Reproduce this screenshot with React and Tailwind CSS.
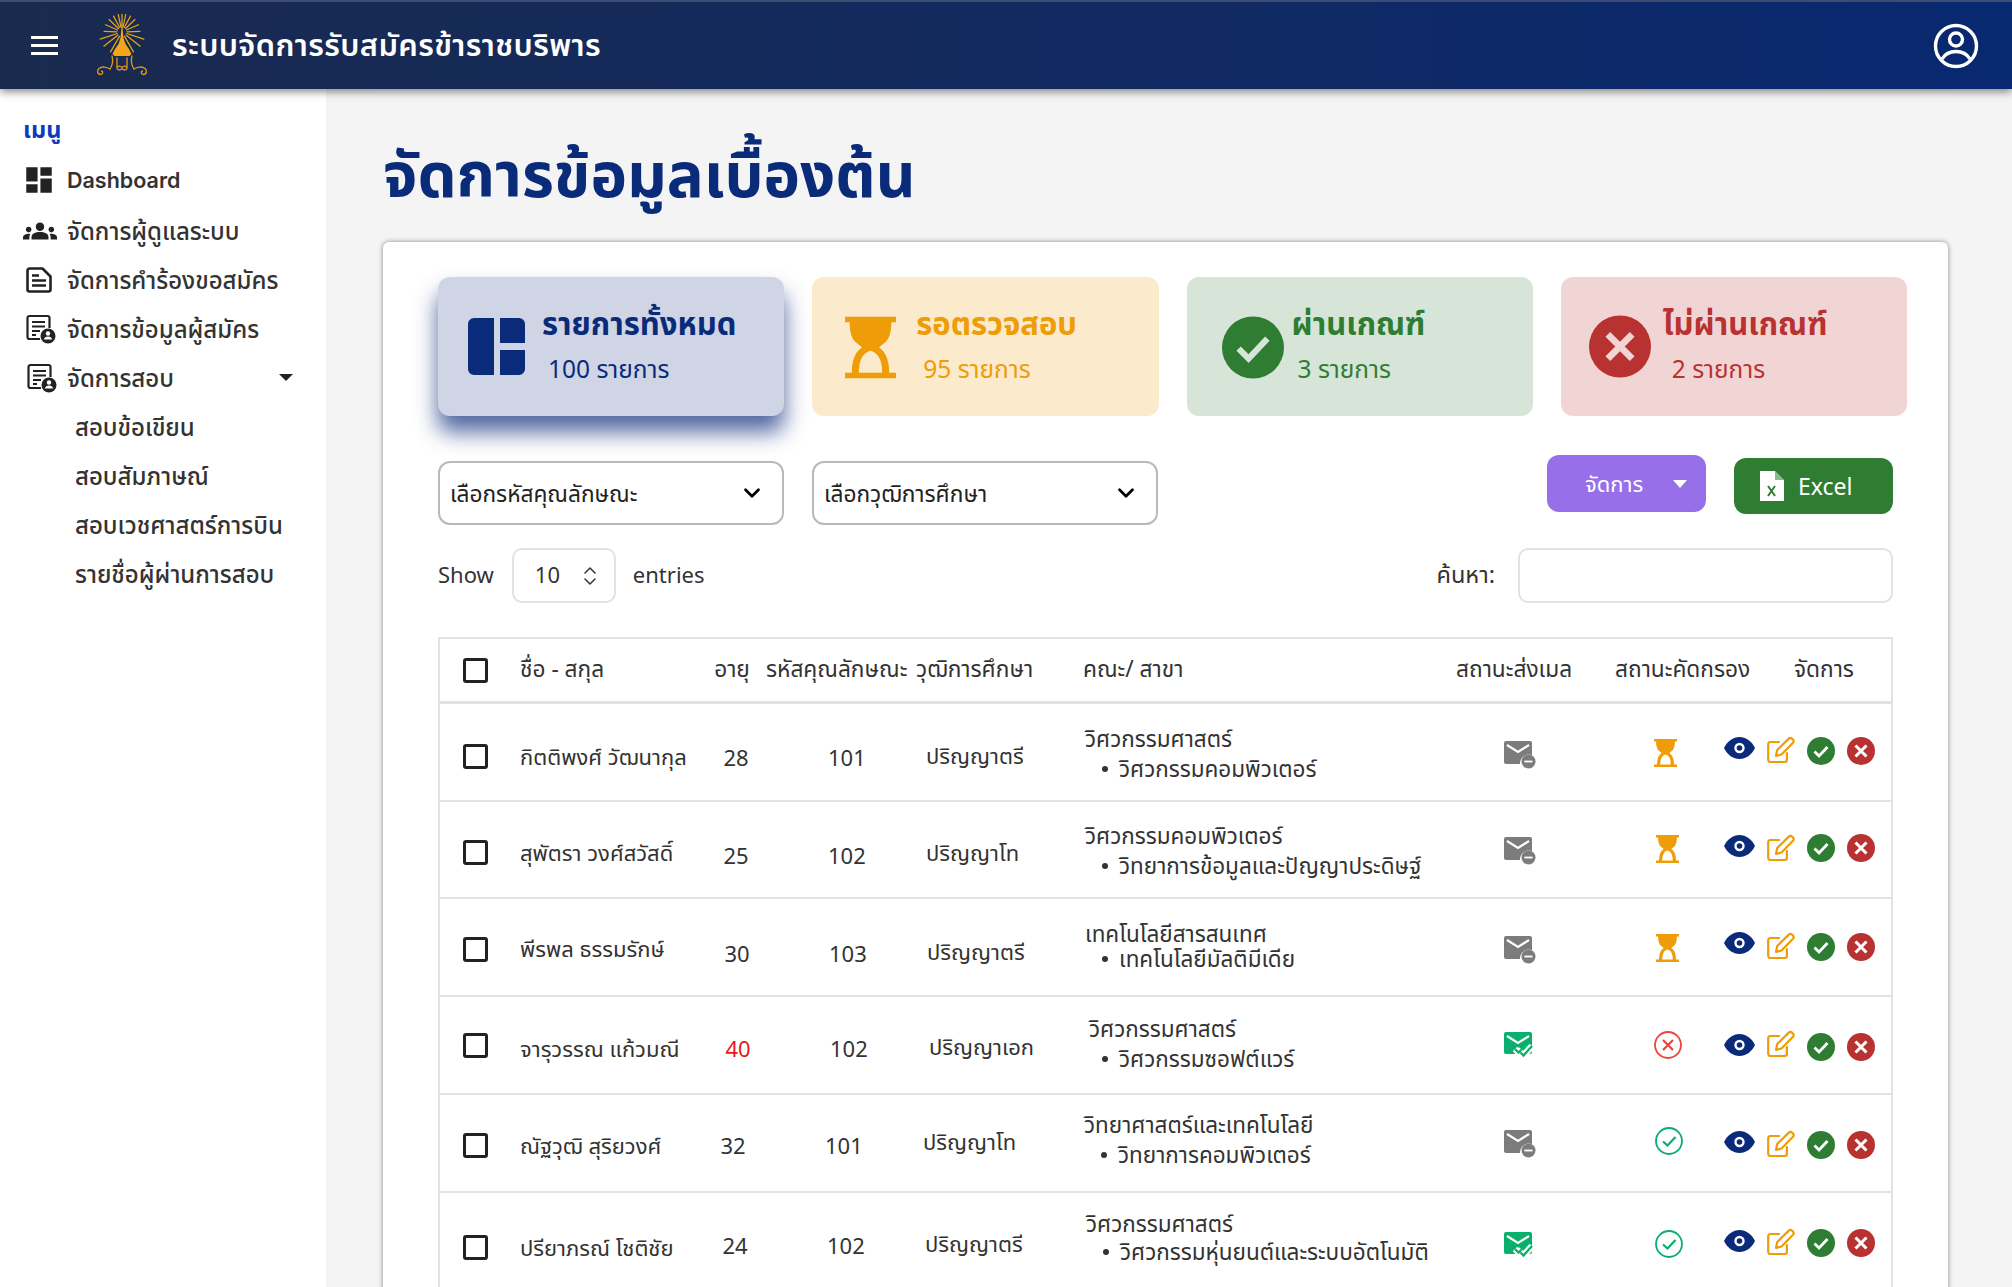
import { MdDashboard, MdGroups } from 'react-icons/md';
import { ChevronDown, ChevronsUpDown } from 'lucide-react';

const font = "font-['Noto_Sans','Noto_Sans_Thai','DejaVu_Sans',sans-serif]";

const rayAngles = [-150, -128, -108, -88, -66, -46, -28, -12, 0, 12, 28, 46, 66, 88, 108, 128, 150];

const Logo = () => (
  <svg width="52" height="63" viewBox="0 0 52 63" fill="none">
    <g stroke="#e8a51c" strokeWidth="1.200" strokeLinecap="round">
      {rayAngles.map(a => {
        const rad = (a * Math.PI) / 180;
        const long = Math.abs(a) > 100 ? 23 : 18;
        return (
          <path
            key={a}
            d={`M${26 + Math.sin(rad) * 5} ${18 - Math.cos(rad) * 5}L${26 + Math.sin(rad) * long} ${18 - Math.cos(rad) * long}`}
          />
        );
      })}
    </g>
    <path d="M26 8l1.500 16 2 6 3.500 5 2.500 5-2 2H18.500l-2-2 2.500-5 3.500-5 2-6z" fill="#f2a51a" />
    <g stroke="#e0981a" strokeWidth="1.300" strokeLinecap="round">
      <path d="M16 42c1.500 5 .5 9-2 13M36 42c-1.500 5-.5 9 2 13M21 44v9M31 44v9" />
      <path d="M14 55c-3-2-8-3-11-.5-2.500 2-1.500 6 1.500 6 2.500 0 3-3 1-3.500M38 55c3-2 8-3 11-.5 2.500 2 1.500 6-1.500 6-2.500 0-3-3-1-3.500" />
      <path d="M21 54c.8-2.500 3-2.500 5-.5 2-2 4.200-2 5 .5 0 2.500-3 2.500-5 .8-2 1.700-5 1.700-5-.8z" />
    </g>
  </svg>
);

const UserIcon = () => (
  <svg width="46" height="46" viewBox="0 0 46 46" fill="none" stroke="white" strokeWidth="3.400">
    <circle cx="23" cy="23" r="20.500" />
    <circle cx="23" cy="16.500" r="6.500" />
    <path d="M9 36c3-5 8.500-7.500 14-7.500S34 31 37 36" />
  </svg>
);

const Hourglass = ({ className }) => (
  <svg className={className} viewBox="0 0 24 29" fill="none">
    <path d="M0 0h24v2.600h-2.200c0 3.800-.6 7.200-2.600 9.200-1.200 1.100-2.300 1.700-3.200 2.700 2.700 1.800 4.100 4.600 4.600 8.700l.2 3.200H24V29H0v-2.600h3.200l.2-3.200c.5-4.100 1.900-6.900 4.600-8.700-.9-1-2-1.600-3.200-2.700C2.800 9.800 2.200 6.400 2.200 2.600H0z" fill="#ee9c07" />
    <path d="M6.500 26.400c0-5.900 1.900-9.600 5.500-10.400 3.600.8 5.500 4.500 5.500 10.400z" fill="currentColor" />
  </svg>
);

const CheckDisc = ({ className, mark = 'white' }) => (
  <svg className={className} viewBox="0 0 28 28">
    <circle cx="14" cy="14" r="14" fill="#2e7d32" />
    <path d="M7.500 14.500l4.500 4.500 8.500-9" fill="none" stroke={mark} strokeWidth="2.800" />
  </svg>
);

const CrossDisc = ({ className, mark = 'white' }) => (
  <svg className={className} viewBox="0 0 28 28">
    <circle cx="14" cy="14" r="14" fill="#b93232" />
    <path d="M8.500 8.500l11 11M19.500 8.500l-11 11" fill="none" stroke={mark} strokeWidth="3" />
  </svg>
);

const Eye = ({ className }) => (
  <svg className={className} width="31" height="22" viewBox="0 0 31 22">
    <path d="M0 11C3.500 4 9 0 15.500 0S27.500 4 31 11c-3.500 7-9 11-15.500 11S3.500 18 0 11z" fill="#0a2a7a" />
    <circle cx="15.500" cy="11" r="4" fill="none" stroke="white" strokeWidth="2.400" />
  </svg>
);

const Edit = ({ className }) => (
  <svg className={className} width="28" height="28" viewBox="0 0 28 28" fill="none" stroke="#ee9c07" strokeWidth="2.200" strokeLinejoin="round" strokeLinecap="round">
    <path d="M12 6H3.500A2.200 2.200 0 0 0 1.200 8.200v15.600A2.200 2.200 0 0 0 3.500 26h14.200a2.200 2.200 0 0 0 2.200-2.200V17" />
    <path d="M9 20l1.200-6L21.800 2.600a2.200 2.200 0 0 1 3.200 0l1 1a2.200 2.200 0 0 1 0 3.200L14.500 18.500z" />
  </svg>
);

const MailMinus = () => (
  <svg width="32" height="28" viewBox="0 0 32 28">
    <path d="M2 0h24a2 2 0 0 1 2 2v12a9 9 0 0 0-12 9H2a2 2 0 0 1-2-2V2a2 2 0 0 1 2-2z" fill="#7c7c7c" />
    <path d="M3 4l11 7 11-7" fill="none" stroke="white" strokeWidth="2.200" />
    <circle cx="24.500" cy="20.500" r="7" fill="#7c7c7c" />
    <path d="M20.500 20.500h8" stroke="white" strokeWidth="1.800" />
  </svg>
);

const MailCheck = () => (
  <svg width="30" height="26" viewBox="0 0 30 26">
    <path d="M2 0h24a2 2 0 0 1 2 2v18a2 2 0 0 1-2 2H2a2 2 0 0 1-2-2V2a2 2 0 0 1 2-2z" fill="#0aae6d" />
    <path d="M3 4l11 7 11-7" fill="none" stroke="white" strokeWidth="2.200" />
    <path d="M11 17l3.500 3.500 3-3M16.500 20.500l3 3 8.500-9.500" fill="none" stroke="white" strokeWidth="6.500" />
    <path d="M11 17l3.500 3.500 3-3M16.500 20.500l3 3 8.500-9.500" fill="none" stroke="#0aae6d" strokeWidth="2.300" />
  </svg>
);

const StatusOk = () => (
  <svg width="28" height="28" viewBox="0 0 28 28" fill="none" stroke="#0aae6d" strokeWidth="1.800">
    <circle cx="14" cy="14" r="13" />
    <path d="M8 14.500l4.500 4 8-8.500" strokeWidth="2.200" />
  </svg>
);

const StatusBad = () => (
  <svg width="28" height="28" viewBox="0 0 28 28" fill="none" stroke="#f0443a" strokeWidth="1.800">
    <circle cx="14" cy="14" r="13" />
    <path d="M9 9l10 10M19 9L9 19" strokeWidth="2.200" />
  </svg>
);

const DocIcon = () => (
  <svg width="26" height="26" viewBox="0 0 26 26" fill="none" stroke="#222" strokeWidth="2.600">
    <path d="M3.500 1.500h13l8 8V22.500a2 2 0 0 1-2 2h-19a2 2 0 0 1-2-2v-19a2 2 0 0 1 2-2z" strokeLinejoin="round" />
    <path d="M6 8.500h7M6 13.500h14M6 18.500h14" />
  </svg>
);

const FormPerson = () => (
  <svg width="30" height="30" viewBox="0 0 30 30">
    <path d="M14 25H3.500a2 2 0 0 1-2-2V4a2 2 0 0 1 2-2h18a2 2 0 0 1 2 2v10" fill="none" stroke="#222" strokeWidth="2.200" />
    <path d="M6 8h13M6 12.500h13M6 17h8M6 21h4" stroke="#222" strokeWidth="2" />
    <circle cx="22" cy="22" r="7.500" fill="#222" />
    <circle cx="22" cy="19.500" r="2.200" fill="white" />
    <path d="M17.800 25.500c.5-2 2.200-3 4.200-3s3.700 1 4.200 3z" fill="white" />
  </svg>
);

const Excel = () => (
  <svg width="24" height="30" viewBox="0 0 24 30">
    <path d="M0 0h15l9 9v21H0z" fill="white" />
    <path d="M15 0l9 9h-9z" fill="#2e7d32" opacity=".55" />
    <path d="M8 15l7 10M15 15l-7 10" stroke="#2e7d32" strokeWidth="2" />
  </svg>
);

// each row sits a few px off-centre in the mock, so offsets are kept per row
const rows = [
  {
    name: 'กิตติพงศ์ วัฒนากุล', age: '28', code: '101', degree: 'ปริญญาตรี', faculty: 'วิศวกรรมศาสตร์', major: 'วิศวกรรมคอมพิวเตอร์', status: 'wait', mail: false,
    h: 'h-[98px]', nameW: 'w-[186px]', facW: 'w-[373px]', facX: 'pl-[2px]', majX: 'pl-[17px]', stX: 'pl-[39px]', degX: 'pl-[12px]', lead: 'leading-[30px]',
    box: 'mt-[8px]', nameY: 'mt-[8px]', num: 'mt-[10px]', deg: 'mt-[6px]', fac: 'mt-[4px]', mailY: 'mt-[6px]', st: 'mt-[2px]', eye: '-mt-[8px]', edit: '-mt-[4px]', act: '-mt-[2px]',
  },
  {
    name: 'สุพัตรา วงศ์สวัสดิ์', age: '25', code: '102', degree: 'ปริญญาโท', faculty: 'วิศวกรรมคอมพิวเตอร์', major: 'วิทยาการข้อมูลและปัญญาประดิษฐ์', status: 'wait', mail: false,
    h: 'h-[97px]', nameW: 'w-[186px]', facW: 'w-[373px]', facX: 'pl-[2px]', majX: 'pl-[17px]', stX: 'pl-[41px]', degX: 'pl-[12px]', lead: 'leading-[30px]',
    box: 'mt-[6px]', nameY: 'mt-[6px]', num: 'mt-[12px]', deg: 'mt-[6px]', fac: 'mt-[2px]', mailY: 'mt-[2px]', st: '-mt-[2px]', eye: '-mt-[8px]', edit: '-mt-[4px]', act: '-mt-[4px]',
  },
  {
    name: 'พีรพล ธรรมรักษ์', age: '30', code: '103', degree: 'ปริญญาตรี', faculty: 'เทคโนโลยีสารสนเทศ', major: 'เทคโนโลยีมัลติมีเดีย', status: 'wait', mail: false,
    h: 'h-[98px]', nameW: 'w-[187px]', facW: 'w-[372px]', facX: 'pl-[1px]', majX: 'pl-[17px]', stX: 'pl-[41px]', degX: 'pl-[12px]', lead: 'leading-[25px]',
    box: 'mt-[4px]', nameY: 'mt-[2px]', num: 'mt-[12px]', deg: 'mt-[8px]', fac: '-mt-[2px]', mailY: 'mt-[6px]', st: 'mt-[2px]', eye: '-mt-[8px]', edit: '-mt-[2px]', act: 'mt-[0px]',
  },
  {
    name: 'จารุวรรณ แก้วมณี', age: '40', code: '102', degree: 'ปริญญาเอก', faculty: 'วิศวกรรมศาสตร์', major: 'วิศวกรรมซอฟต์แวร์', status: 'bad', mail: true, red: true,
    h: 'h-[98px]', nameW: 'w-[188px]', facW: 'w-[371px]', facX: 'pl-[4px]', majX: 'pl-[13px]', stX: 'pl-[39px]', degX: 'pl-[13px]', lead: 'leading-[30px]',
    box: 'mt-[0px]', nameY: 'mt-[6px]', num: 'mt-[6px]', deg: 'mt-[2px]', fac: '-mt-[2px]', mailY: 'mt-[0px]', st: 'mt-[0px]', eye: 'mt-[0px]', edit: '-mt-[2px]', act: 'mt-[4px]',
  },
  {
    name: 'ณัฐวุฒิ สุริยวงศ์', age: '32', code: '101', degree: 'ปริญญาโท', faculty: 'วิทยาศาสตร์และเทคโนโลยี', major: 'วิทยาการคอมพิวเตอร์', status: 'ok', mail: false,
    h: 'h-[98px]', nameW: 'w-[183px]', facW: 'w-[376px]', facX: 'pl-[4px]', majX: 'pl-[17px]', stX: 'pl-[40px]', degX: 'pl-[12px]', lead: 'leading-[30px]',
    box: 'mt-[4px]', nameY: 'mt-[4px]', num: 'mt-[4px]', deg: '-mt-[4px]', fac: '-mt-[6px]', mailY: 'mt-[2px]', st: '-mt-[4px]', eye: '-mt-[2px]', edit: 'mt-[2px]', act: 'mt-[4px]',
  },
  {
    name: 'ปรียาภรณ์ โชติชัย', age: '24', code: '102', degree: 'ปริญญาตรี', faculty: 'วิศวกรรมศาสตร์', major: 'วิศวกรรมหุ่นยนต์และระบบอัตโนมัติ', status: 'ok', mail: true,
    h: 'h-[98px]', nameW: 'w-[185px]', facW: 'w-[374px]', facX: 'pl-[4px]', majX: 'pl-[17px]', stX: 'pl-[40px]', degX: 'pl-[12px]', lead: 'leading-[28px]',
    box: 'mt-[12px]', nameY: 'mt-[12px]', num: 'mt-[8px]', deg: 'mt-[4px]', fac: '-mt-[6px]', mailY: 'mt-[8px]', st: 'mt-[6px]', eye: 'mt-[0px]', edit: 'mt-[2px]', act: 'mt-[4px]',
  },
];

const menu = [
  { label: 'จัดการผู้ดูแลระบบ', icon: <MdGroups size={34} /> },
  { label: 'จัดการคำร้องขอสมัคร', icon: <span className="block pl-[3px]"><DocIcon /></span> },
  { label: 'จัดการข้อมูลผู้สมัคร', icon: <span className="block pl-[3px]"><FormPerson /></span> },
];

const subMenu = ['สอบข้อเขียน', 'สอบสัมภาษณ์', 'สอบเวชศาสตร์การบิน', 'รายชื่อผู้ผ่านการสอบ'];

const Box = ({ className = '' }) => <div className={`w-[25px] h-[25px] border-[3px] border-[#222] rounded-[3px] ${className}`} />;

const App = () => (
  <div className={`${font} w-[2012px] h-[1287px] overflow-hidden bg-[#f4f4f4] text-[#333] flex flex-col`}>
    <header className="relative z-10 h-[89px] shrink-0 flex items-center bg-gradient-to-r from-[#1a2a4f] to-[#082870] border-t-2 border-[#3c4d74] shadow-[0_3px_8px_rgba(0,0,0,0.45)] pl-[31px] pr-[33px]">
      <div className="w-[27px] flex flex-col gap-[5px]">
        <span className="h-[3px] bg-white" />
        <span className="h-[3px] bg-white" />
        <span className="h-[3px] bg-white" />
      </div>
      <div className="ml-[38px]"><Logo /></div>
      <h1 className="ml-[24px] pb-[2px] text-white text-[30.800px] font-semibold tracking-[0.4px]">ระบบจัดการรับสมัครข้าราชบริพาร</h1>
      <div className="ml-auto"><UserIcon /></div>
    </header>

    <div className="flex flex-1 min-h-0">
      <aside className="w-[326px] shrink-0 bg-white pt-[23px] pl-[23px] pr-[33px] text-[#333]">
        <div className="text-[23.500px] font-bold text-[#0a3cc0] leading-[34px]">เมนู</div>
        <div className="mt-[8px] flex items-center h-[52px]">
          <span className="w-[44px] -ml-[1px] text-[#222]"><MdDashboard size={34} /></span>
          <span className="ml-[1px] font-['Inter'] text-[21.500px] font-semibold">Dashboard</span>
        </div>
        {menu.map(m => (
          <div key={m.label} className="flex items-center h-[49px] text-[24px] font-medium">
            <span className="w-[44px] shrink-0 text-[#222]">{m.icon}</span>
            <span className="whitespace-nowrap">{m.label}</span>
          </div>
        ))}
        <div className="flex items-center h-[49px] text-[24px] font-medium">
          <span className="w-[44px] pl-[4px] text-[#222]"><FormPerson /></span>
          <span>จัดการสอบ</span>
          <span className="ml-auto w-0 h-0 border-x-[7px] border-x-transparent border-t-[7px] border-t-[#222]" />
        </div>
        {subMenu.map(s => (
          <div key={s} className="pl-[52px] h-[49px] flex items-center text-[24px] font-medium whitespace-nowrap">{s}</div>
        ))}
      </aside>

      <main className="flex-1 min-w-0 pl-[57px] pr-[64px]">
        <h2 className="mt-[44px] text-[61.700px] leading-[80px] font-bold text-[#0a2a7a]">จัดการข้อมูลเบื้องต้น</h2>
        <section className="mt-[29px] bg-white rounded-t-[6px] shadow-[0_0_5px_rgba(0,0,0,0.45)] pt-[35px] pl-[55px] pr-[41px] h-[1100px]">
          <div className="grid grid-cols-4 gap-[28px] h-[139px]">
            <div className="rounded-[12px] bg-[#cfd5e5] shadow-[0_16px_22px_rgba(10,40,120,0.7)] flex pl-[30px] pt-[41px]">
              <svg width="57" height="57" viewBox="0 0 57 57" className="mr-[17px]">
                <path d="M6 0h20v57H6a6 6 0 0 1-6-6V6a6 6 0 0 1 6-6zM32 0h19a6 6 0 0 1 6 6v19H32zM32 32h25v19a6 6 0 0 1-6 6H32z" fill="#0a2a7a" />
              </svg>
              <div className="-mt-[20px]">
                <div className="text-[31px] font-bold leading-[50px] text-[#0a2a7a]">รายการทั้งหมด</div>
                <div className="pl-[6px] text-[24.500px] leading-[42px] text-[#0a2a7a]">100 รายการ</div>
              </div>
            </div>
            <div className="rounded-[12px] bg-[#fbeacb] text-[#fbeacb] flex pl-[33px] pt-[39px]">
              <Hourglass className="w-[51px] h-[63px] mr-[20px]" />
              <div className="-mt-[18px]">
                <div className="text-[31px] font-bold leading-[50px] text-[#ee9c07]">รอตรวจสอบ</div>
                <div className="pl-[7px] text-[24.500px] leading-[42px] text-[#ee9c07]">95 รายการ</div>
              </div>
            </div>
            <div className="rounded-[12px] bg-[#d6e5d8] flex pl-[35px] pt-[39px]">
              <CheckDisc className="w-[62px] h-[63px] mr-[8px]" mark="#d6e5d8" />
              <div className="-mt-[18px]">
                <div className="text-[31px] font-bold leading-[50px] text-[#2e7d32]">ผ่านเกณฑ์</div>
                <div className="pl-[6px] text-[24.500px] leading-[42px] text-[#2e7d32]">3 รายการ</div>
              </div>
            </div>
            <div className="rounded-[12px] bg-[#f1d5d5] flex pl-[28px] pt-[38px]">
              <CrossDisc className="w-[62px] h-[63px] mr-[12px]" mark="#f1d5d5" />
              <div className="-mt-[17px]">
                <div className="text-[31px] font-bold leading-[50px] text-[#b93232]">ไม่ผ่านเกณฑ์</div>
                <div className="pl-[9px] text-[24.500px] leading-[42px] text-[#b93232]">2 รายการ</div>
              </div>
            </div>
          </div>

          <div className="mt-[39px] flex items-start">
            <div className="mt-[6px] grid grid-cols-2 gap-[28px] w-[720px]">
              {['เลือกรหัสคุณลักษณะ', 'เลือกวุฒิการศึกษา'].map(t => (
                <div key={t} className="h-[64px] border-2 border-[#b9b9b9] rounded-[12px] flex items-center justify-between pl-[10px] pr-[17px] text-[22.700px] text-[#222]">
                  <span className="pt-[2px]">{t}</span>
                  <ChevronDown size={26} strokeWidth={2.5} className="text-black" />
                </div>
              ))}
            </div>
            <div className="ml-auto mr-[14px] flex items-start gap-[28px]">
              <div className="h-[57px] w-[159px] rounded-[12px] bg-[#976fe8] text-white text-[22px] flex items-center pl-[38px]">
                <span>จัดการ</span>
                <span className="ml-[30px] w-0 h-0 border-x-[7px] border-x-transparent border-t-[8px] border-t-white" />
              </div>
              <div className="mt-[3px] h-[56px] w-[159px] rounded-[12px] bg-[#2e7d32] text-white text-[23px] flex items-center pl-[26px] gap-[14px]">
                <Excel />
                <span>Excel</span>
              </div>
            </div>
          </div>

          <div className="mt-[23px] flex items-center h-[55px] text-[22px] text-[#333] pr-[14px]">
            <span className="pb-[2px]">Show</span>
            <div className="ml-[18px] w-[104px] h-[55px] border-2 border-[#e2e2e2] rounded-[10px] flex items-center pl-[21px] gap-[18px]">
              <span className="pb-[2px]">10</span>
              <ChevronsUpDown size={24} strokeWidth={1.5} />
            </div>
            <span className="ml-[17px] pb-[2px]">entries</span>
            <span className="ml-auto pb-[2px] text-[23.500px]">ค้นหา:</span>
            <div className="ml-[23px] w-[375px] h-[55px] border-2 border-[#e2e2e2] rounded-[10px]" />
          </div>

          <div className="mt-[34px] mr-[14px] border-2 border-[#e2e2e2] text-[22px] text-[#333]">
            <div className="h-[65px] flex items-center border-b-[3px] border-[#e2e2e2] leading-[30px] text-[22.700px] whitespace-nowrap">
              <div className="w-[80px] pl-[23px]"><Box /></div>
              <div className="w-[182px] pb-[2px]">ชื่อ - สกุล</div>
              <div className="w-[64px] pr-[4px] pb-[2px] text-center">อายุ</div>
              <div className="w-[150px] pb-[2px]">รหัสคุณลักษณะ</div>
              <div className="w-[167px] pb-[2px]">วุฒิการศึกษา</div>
              <div className="w-[373px] pb-[2px]">คณะ/ สาขา</div>
              <div className="w-[159px] pb-[2px]">สถานะส่งเมล</div>
              <div className="w-[179px] pb-[2px]">สถานะคัดกรอง</div>
              <div className="pb-[2px]">จัดการ</div>
            </div>
            {rows.map(r => (
              <div key={r.name} className={`${r.h} flex items-center border-b-2 border-[#e2e2e2] leading-[29px] whitespace-nowrap`}>
                <div className={`w-[80px] shrink-0 pl-[23px] ${r.box}`}><Box /></div>
                <div className={`${r.nameW} shrink-0 ${r.nameY}`}>{r.name}</div>
                <div className={`w-[60px] shrink-0 text-center ${r.num} ${r.red ? 'text-[#e81818]' : ''}`}>{r.age}</div>
                <div className={`w-[148px] shrink-0 pl-[62px] ${r.num}`}>{r.code}</div>
                <div className={`w-[169px] shrink-0 ${r.degX} ${r.deg}`}>{r.degree}</div>
                <div className={`${r.facW} shrink-0 ${r.facX} text-[22.500px] ${r.lead} ${r.fac}`}>
                  <div>{r.faculty}</div>
                  <ul className={r.majX}>
                    <li className="flex items-center">
                      <span className="w-[6px] h-[6px] rounded-full bg-[#333] mr-[11px]" />
                      <span>{r.major}</span>
                    </li>
                  </ul>
                </div>
                <div className={`w-[159px] shrink-0 pl-[48px] ${r.mailY}`}>{r.mail ? <MailCheck /> : <MailMinus />}</div>
                <div className={`w-[109px] shrink-0 text-white ${r.stX} ${r.st}`}>
                  {r.status === 'wait' && <Hourglass className="w-[23px] h-[28px]" />}
                  {r.status === 'ok' && <StatusOk />}
                  {r.status === 'bad' && <StatusBad />}
                </div>
                <div className="self-stretch flex items-center gap-[12px]">
                  <Eye className={r.eye} />
                  <Edit className={r.edit} />
                  <CheckDisc className={`w-[28px] h-[28px] ${r.act}`} />
                  <CrossDisc className={`w-[28px] h-[28px] ${r.act}`} />
                </div>
              </div>
            ))}
          </div>
        </section>
      </main>
    </div>
  </div>
);

export default App;
